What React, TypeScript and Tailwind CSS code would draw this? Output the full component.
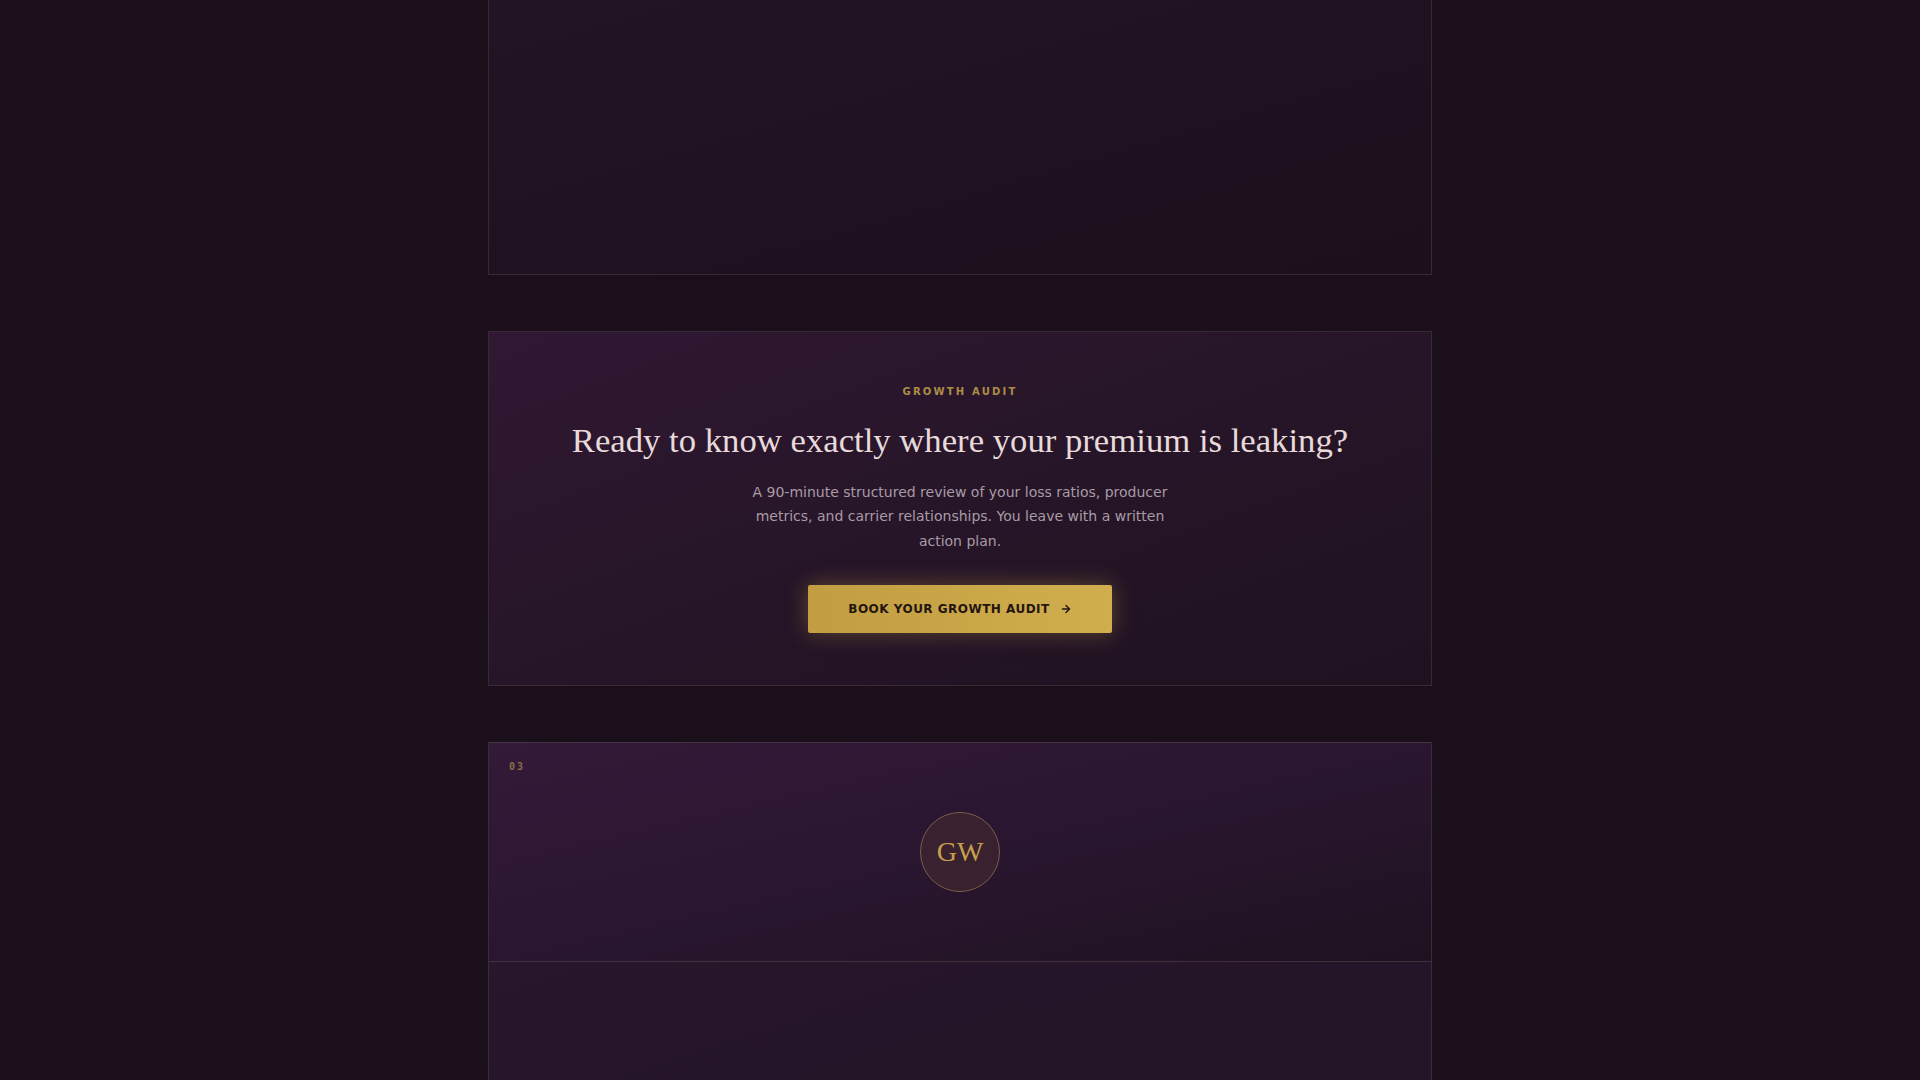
import { ArrowRight } from 'lucide-react';

const serif = "font-['Liberation_Serif',_'Times_New_Roman',_serif]";
const sans = "font-['DejaVu_Sans',_'Liberation_Sans',_sans-serif]";

function AuditCta() {
  return (
    <section className="border border-[#3b2835] bg-linear-to-br from-[#301833] via-[#261528] to-[#1f1220] px-12 py-[52px] text-center">
      <div className={`${sans} text-[10px] font-bold uppercase leading-4 tracking-[0.22em] text-[#ad8d45]`}>
        Growth Audit
      </div>
      <h2 className={`${serif} mt-5 text-[34.7px] leading-[1.2] font-normal text-[#e8dadb]`}>
        Ready to know exactly where your premium is leaking?
      </h2>
      <p className={`${sans} mx-auto mt-[18px] max-w-md text-sm leading-[1.75] text-[#a99ba5]`}>
        A 90-minute structured review of your loss ratios, producer metrics, and carrier relationships. You leave
        with a written action plan.
      </p>
      <button
        className={`${sans} mt-8 inline-flex h-12 items-center gap-2.5 rounded-[2px] bg-linear-to-r from-[#c29d42] to-[#d0ae4e] px-10 text-xs font-bold uppercase tracking-[0.04em] text-[#24150f] shadow-[0_0_22px_rgba(205,166,72,0.35)]`}
      >
        Book your growth audit
        <ArrowRight size={12} strokeWidth={2.75} />
      </button>
    </section>
  );
}

function ProfileCard() {
  return (
    <article className="border border-[#3e2b3a] border-t-[#463342]">
      <div className="relative flex h-[219px] items-center justify-center border-b border-[#43303f] bg-linear-to-br from-[#331a38] via-[#2a1630] to-[#1e1220]">
        <span className="absolute left-5 top-4 font-['DejaVu_Sans_Mono',_monospace] text-[10px] font-bold tracking-[0.2em] text-[#8a6c48]">
          03
        </span>
        <div className="flex h-20 w-20 items-center justify-center rounded-full border border-[#7a5e45] bg-[#392130]">
          <span className={`${serif} text-[28px] leading-none text-[#c6a04a]`}>GW</span>
        </div>
      </div>
      <div className="h-[300px] bg-linear-to-br from-[#27162c] to-[#211325]" />
    </article>
  );
}

export default function App() {
  return (
    <div className="min-h-screen overflow-hidden bg-[#1a0f1b]">
      <div className="mx-auto flex w-[944px] flex-col gap-14">
        {/* previous card, scrolled mostly out of view */}
        <div className="h-[275px] border border-t-0 border-[#3a2835] bg-linear-to-br from-[#211424] to-[#1c101d]" />
        <AuditCta />
        <ProfileCard />
      </div>
    </div>
  );
}
